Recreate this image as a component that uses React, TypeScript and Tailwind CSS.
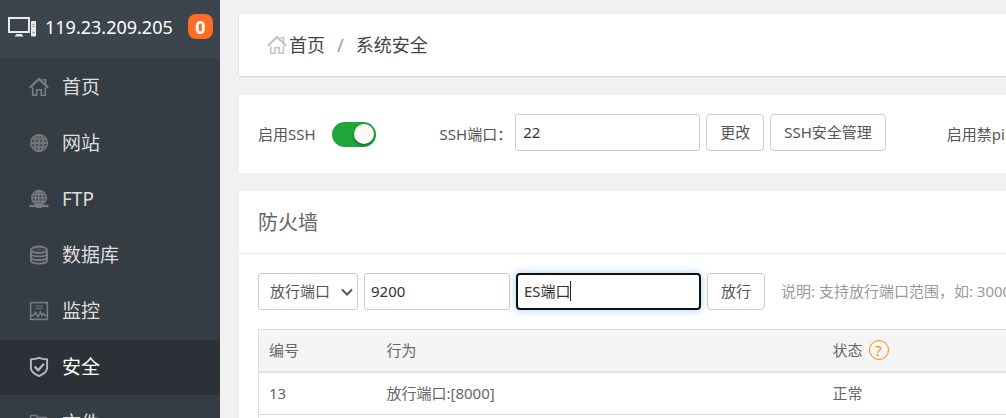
import type { ReactNode } from "react";

function HomeIcon({ className }: { className: string }) {
  return (
    <svg className={className} viewBox="0 0 20 20" fill="none" stroke="currentColor" strokeWidth="1.6" aria-hidden="true">
      <path d="M0.800 10.800 10 2l9.200 8.800" strokeWidth="2.200" />
      <path d="M13.500 2.800h3v4.500" />
      <path d="M3.700 10.500v7.800h4v-5.600h4.600v5.600h4v-7.800" />
    </svg>
  );
}

function GlobeIcon() {
  return (
    <svg className="size-5" viewBox="0 0 20 20" fill="none" stroke="currentColor" strokeWidth="1.3" aria-hidden="true">
      <circle cx="10" cy="10" r="8.400" fill="currentColor" fillOpacity="0.3" />
      <ellipse cx="10" cy="10" rx="4.200" ry="8.400" />
      <path d="M10 1.600v16.800M1.600 10h16.800M3 5.800h14M3 14.200h14" />
    </svg>
  );
}

function FtpIcon() {
  return (
    <svg className="size-5" viewBox="0 0 20 20" fill="none" stroke="currentColor" strokeWidth="1.3" aria-hidden="true">
      <circle cx="10" cy="8.800" r="7.300" fill="currentColor" fillOpacity="0.3" />
      <ellipse cx="10" cy="8.800" rx="3.500" ry="7.300" />
      <path d="M10 1.500v14.400M2.800 8.800h14.400M4 5.300h12M4 12.300h12" />
      <path d="M0.500 17h19" strokeWidth="2.200" />
      <path d="M7 17h6" strokeWidth="3.800" />
    </svg>
  );
}

function DatabaseIcon() {
  return (
    <svg className="size-5" viewBox="0 0 20 20" fill="none" stroke="currentColor" strokeWidth="1.800" aria-hidden="true">
      <ellipse cx="10" cy="4.800" rx="8" ry="3.300" fill="currentColor" fillOpacity="0.2" />
      <path d="M2 4.800v10.800c0 4 16 4 16 0V4.800" />
      <path d="M2 8.400c0 4 16 4 16 0M2 12c0 4 16 4 16 0" />
    </svg>
  );
}

function MonitorIcon() {
  return (
    <svg className="size-5" viewBox="0 0 20 20" fill="none" stroke="currentColor" strokeWidth="1.500" aria-hidden="true">
      <rect x="1.600" y="1.600" width="16.800" height="16.800" />
      <path d="M6.500 5h7.500M6.500 7.500h7.500" opacity="0.6" />
      <path d="M2 14.500h2.500l2-3 2.500 4.500 2.500-5 1.500 3.500 1.500-2 1.500 2H18" />
    </svg>
  );
}

function ShieldIcon() {
  return (
    <svg className="size-5" viewBox="0 0 20 20" fill="none" stroke="currentColor" strokeWidth="1.900" aria-hidden="true">
      <path d="M10 0.900C7.500 1.800 4.500 2.200 1.900 2.400v8.600c0 4 4.500 6.500 8.100 8.100 3.600-1.600 8.100-4.100 8.100-8.100V2.400C15.500 2.200 12.500 1.800 10 0.900z" />
      <path d="m5.600 9.600 3.600 3.700 5.700-6.500" strokeWidth="2.200" />
    </svg>
  );
}

function FolderIcon() {
  return (
    <svg className="size-5" viewBox="0 0 20 20" fill="none" stroke="currentColor" strokeWidth="1.500" aria-hidden="true">
      <path d="M1.500 17V3.500q0-1 1-1H7l2 2h8.500V17z" />
      <path d="M4 7.500h12" />
    </svg>
  );
}

function ComputerIcon() {
  return (
    <svg className="h-5 w-7 shrink-0" viewBox="0 0 28 20" aria-hidden="true">
      <path d="M1 1h20v14H1z" fill="none" stroke="#e9eaeb" strokeWidth="2" />
      <path d="M8.500 17h5l2 2.500h-9z" fill="#e9eaeb" />
      <rect x="23" y="4" width="5" height="15.500" rx="0.800" fill="#e9eaeb" />
      <path d="M24.500 7.500h2M24.500 9.500h2" stroke="#8a9096" />
      <circle cx="25.500" cy="15.500" r="1" fill="#8a9096" />
    </svg>
  );
}

const menu: { label: string; icon: ReactNode; active?: boolean }[] = [
  { label: "首页", icon: <HomeIcon className="size-5" /> },
  { label: "网站", icon: <GlobeIcon /> },
  { label: "FTP", icon: <FtpIcon /> },
  { label: "数据库", icon: <DatabaseIcon /> },
  { label: "监控", icon: <MonitorIcon /> },
  { label: "安全", icon: <ShieldIcon />, active: true },
  { label: "文件", icon: <FolderIcon /> },
];

function Sidebar() {
  return (
    <aside className="w-[220px] shrink-0 bg-[#353d44]">
      <header className="flex h-[58px] items-center bg-[#3c444d] px-2 pb-[5px] text-white">
        <ComputerIcon />
        <span className="ml-[9px] text-lg leading-6">119.23.209.205</span>
        <span className="-mr-px ml-auto flex h-[25px] w-[25px] items-center justify-center rounded-lg bg-[#ff6c23] text-lg font-bold">
          0
        </span>
      </header>
      <nav className="flex flex-col gap-px pt-0.5">
        {menu.map((item) => (
          <a
            key={item.label}
            href="#"
            aria-current={item.active ? "page" : undefined}
            className={
              item.active
                ? "flex h-[55px] items-center gap-[13px] bg-[#2c3138] pl-[29px] text-[19px] text-white"
                : "flex h-[55px] items-center gap-[13px] pl-[29px] text-[19px] text-[#dddedf]"
            }
          >
            <span className={item.active ? "pb-0.5 text-[#b9bcbf]" : "pb-0.5 text-[#7a7e82]"}>{item.icon}</span>
            {item.label}
          </a>
        ))}
      </nav>
    </aside>
  );
}

function Button({ children }: { children: ReactNode }) {
  return (
    <button type="button" className="h-[37px] shrink-0 rounded-[4px] border border-[#ccc] bg-white px-[13px] text-[#555]">
      {children}
    </button>
  );
}

function Switch({ label, checked }: { label: string; checked: boolean }) {
  return (
    <label className="flex shrink-0 items-center gap-4">
      {label}
      <input type="checkbox" defaultChecked={checked} className="peer sr-only" />
      <span className="flex h-[25px] w-11 items-center rounded-full bg-[#ccc] px-0.5 peer-checked:justify-end peer-checked:bg-[#20a53a]">
        <span className="size-5 rounded-full bg-[#fafafa] shadow-[0_2px_3px_rgba(0,0,0,0.3)]" />
      </span>
    </label>
  );
}

function Firewall() {
  return (
    <section className="bg-white">
      <h2 className="border-b border-[#ebebeb] px-[19px] pb-[14px] pt-[16px] text-[20px] leading-8 text-[#666]">防火墙</h2>
      <div className="px-[19px] pt-[19px]">
        <form className="flex items-center gap-1.5">
          <div className="relative w-[100px] shrink-0">
            <select
              aria-label="类型"
              className="h-[37px] w-full appearance-none rounded-[3px] border border-[#ccc] bg-white pl-[11px] text-[#555]"
            >
              <option>放行端口</option>
            </select>
            <svg
              className="pointer-events-none absolute right-[5px] top-[13px] h-3 w-3"
              viewBox="0 0 12 12"
              fill="none"
              stroke="#555"
              strokeWidth="2"
              aria-hidden="true"
            >
              <path d="m1 3.500 5 5 5-5" />
            </svg>
          </div>
          <input
            aria-label="端口"
            defaultValue="9200"
            className="h-[37px] w-[146px] rounded-[3px] border border-[#ccc] px-1.5 pb-0.5 text-[#333]"
          />
          <div className="relative w-[185px] shrink-0">
            <input
              aria-label="备注"
              defaultValue="ES端口"
              className="h-[37px] w-full rounded-[4px] border-2 border-[#101010] px-1.5 pb-0.5 text-[#333] shadow-[0_0_8px_rgba(102,175,233,0.6)] outline-none"
            />
            <span className="absolute left-[54px] top-2 h-5 w-px bg-[#222]" aria-hidden="true" />
          </div>
          <Button>放行</Button>
          <span className="ml-[10px] whitespace-nowrap text-[#999]">说明: 支持放行端口范围，如: 3000:3500</span>
        </form>
        <table className="mt-[19px] w-full table-fixed border-collapse border border-[#ddd] text-left text-[#666]">
          <colgroup>
            <col className="w-[118px]" />
            <col className="w-[446px]" />
            <col />
          </colgroup>
          <thead className="border-b-2 border-[#e2e2e2] bg-[#f5f5f5]">
            <tr className="h-[42px]">
              <th className="px-2.5 font-normal">编号</th>
              <th className="px-2.5 font-normal">行为</th>
              <th className="px-2.5 font-normal">
                <span className="flex items-center gap-1.5">
                  状态
                  <a
                    href="#"
                    aria-label="帮助"
                    className="flex size-5 items-center justify-center rounded-full border border-[#ff8c00] text-[15px] leading-none text-[#ff8c00]"
                  >
                    ?
                  </a>
                </span>
              </th>
            </tr>
          </thead>
          <tbody>
            <tr className="h-[43px] border-b border-[#ddd]">
              <td className="px-2.5">13</td>
              <td className="px-2.5">放行端口:[8000]</td>
              <td className="px-2.5">正常</td>
            </tr>
            <tr className="h-[43px]">
              <td />
              <td />
              <td />
            </tr>
          </tbody>
        </table>
      </div>
    </section>
  );
}

export default function App() {
  return (
    <div className="flex h-screen overflow-hidden bg-[#f1f1f1] font-['Noto_Sans','Noto_Sans_CJK_SC',sans-serif] text-[15px] text-[#555]">
      <Sidebar />
      <main className="min-w-0 flex-1 overflow-hidden pl-[19px] pt-[14px]">
        <div className="flex min-w-[1000px] flex-col gap-[18px]">
          <nav className="mb-px flex h-[62px] items-center bg-white px-7 text-[18px] text-[#444] shadow-[0_1px_2px_rgba(0,0,0,0.15)]">
            <a href="#" className="flex items-center gap-0.5">
              <HomeIcon className="size-5 text-[#c4c4c4]" />
              首页
            </a>
            <span className="mx-3 text-[#999]">/</span>
            <span>系统安全</span>
          </nav>
          <section className="flex h-[78px] items-center bg-white px-[19px]">
            <Switch label="启用SSH" checked />
            <label htmlFor="ssh-port" className="ml-16 mr-[3px] shrink-0">
              SSH端口：
            </label>
            <div className="mb-1 flex gap-1.5">
              <input
                id="ssh-port"
                defaultValue="22"
                className="h-[37px] w-[185px] rounded-[3px] border border-[#ccc] px-[7px] text-[#333]"
              />
              <Button>更改</Button>
              <Button>SSH安全管理</Button>
            </div>
            <div className="ml-[61px] shrink-0">
              <Switch label="启用禁ping" checked={false} />
            </div>
          </section>
          <Firewall />
        </div>
      </main>
    </div>
  );
}
